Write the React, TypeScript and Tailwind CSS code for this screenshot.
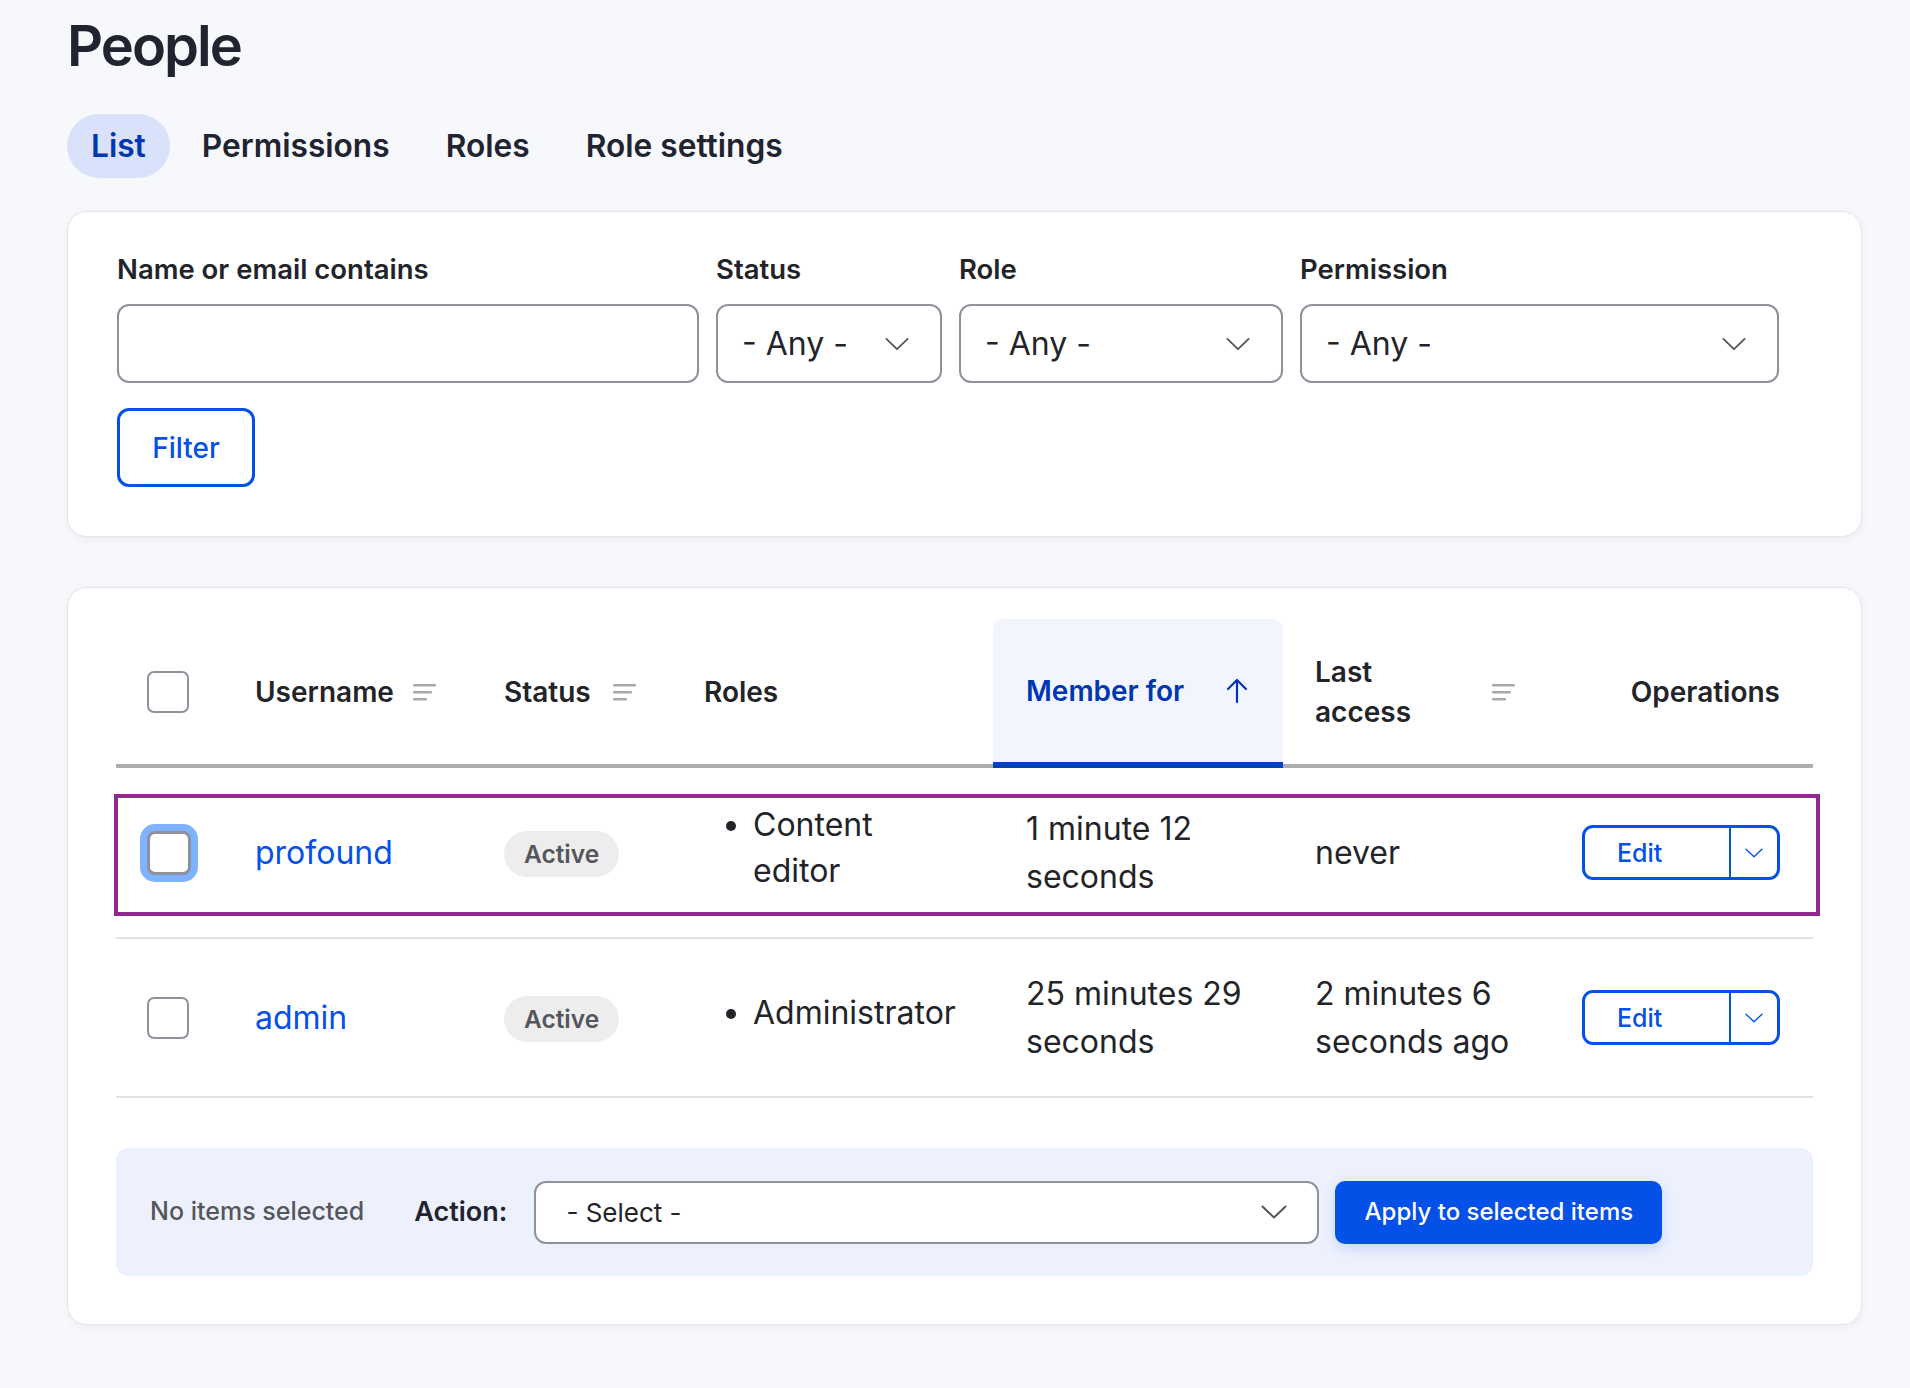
import React from "react";

const Chevron = ({ className = "" }: { className?: string }) => (
  <svg viewBox="0 0 26 14" className={className} fill="none" stroke="currentColor" strokeWidth="2" strokeLinecap="round" strokeLinejoin="round">
    <path d="M1.5 1.5 13 12.5 24.5 1.5" />
  </svg>
);

const SortIcon = () => (
  <svg width="24" height="18" viewBox="0 0 24 18" className="shrink-0">
    <rect x="0" y="1" width="23" height="2.4" rx="1" fill="#a9a9ad" />
    <rect x="0" y="8" width="19" height="2.4" rx="1" fill="#a9a9ad" />
    <rect x="0" y="15" width="14" height="2.4" rx="1" fill="#a9a9ad" />
  </svg>
);

const ArrowUp = () => (
  <svg width="22" height="26" viewBox="0 0 22 26" fill="none" stroke="#0036b1" strokeWidth="2.2" strokeLinecap="round" strokeLinejoin="round" className="shrink-0">
    <path d="M11 24V2M2 11l9-9 9 9" />
  </svg>
);

const Checkbox = ({ focused = false }: { focused?: boolean }) =>
  focused ? (
    <div className="w-[44px] h-[44px] rounded-[8px] border-[3px] border-[#8e929c] bg-white shadow-[0_0_0_7px_#7fb2ff]" />
  ) : (
    <div className="w-[42px] h-[42px] rounded-[7px] border-2 border-[#8e929c] bg-white" />
  );

const Select = ({ width, label }: { width: string; label: string }) => (
  <div className={`${width} h-[79px] rounded-[12px] border-2 border-[#8e929c] bg-white flex items-center justify-between pl-[24px] pr-[31px]`}>
    <span className="text-[32px] text-[#232429]">{label}</span>
    <Chevron className="w-[24px] h-[14px] text-[#55565b]" />
  </div>
);

const EditButton = () => (
  <div className="inline-flex h-[55px] rounded-[11px] border-[3px] border-[#0550e6] bg-white overflow-hidden">
    <span className="w-[144px] pl-[32px] flex items-center text-[25px] font-medium text-[#0550e6]">Edit</span>
    <span className="w-[2px] bg-[#0550e6]" />
    <span className="w-[46px] flex items-center justify-center">
      <Chevron className="w-[18px] h-[10px] text-[#0550e6]" />
    </span>
  </div>
);

const cols = "grid grid-cols-[107px_249px_200px_321px_290px_267px_1fr]";

const rows = [
  {
    name: "profound",
    roles: ["Content editor"],
    member: "1 minute 12 seconds",
    access: "never",
    focused: true,
  },
  {
    name: "admin",
    roles: ["Administrator"],
    member: "25 minutes 29 seconds",
    access: "2 minutes 6 seconds ago",
    focused: false,
  },
];

export default function App() {
  return (
    <div className="min-h-screen bg-[#f7f8fc] font-['Inter',sans-serif] text-[#232429] pl-[67px] pr-[48px] pt-[11px] pb-[64px]">
      <h1 className="text-[56px] leading-[70px] font-semibold tracking-[-0.035em] text-[#222330]">People</h1>

      <nav className="mt-[33px] flex gap-[8px]">
        {["List", "Permissions", "Roles", "Role settings"].map((t, i) => (
          <a
            key={t}
            href="#"
            className={
              i === 0
                ? "h-[64px] px-[24px] rounded-full flex items-center bg-[#d9e2fa] text-[#0036b1] text-[31.7px] font-semibold"
                : "h-[64px] px-[24px] rounded-full flex items-center text-[#222330] text-[31.7px] font-semibold"
            }
          >
            {t}
          </a>
        ))}
      </nav>

      {/* filters */}
      <section className="mt-[33px] rounded-[20px] border border-[#e4e6ec] bg-white shadow-[0_2px_8px_rgba(0,0,0,0.05)] pl-[49px] pt-[40px] pb-[49px]">
        <div className="flex gap-[17px]">
          <div>
            <label className="block text-[27.5px] leading-[35px] font-semibold mb-[17px]">Name or email contains</label>
            <div className="w-[582px] h-[79px] rounded-[12px] border-2 border-[#8e929c] bg-white" />
          </div>
          <div>
            <label className="block text-[27.5px] leading-[35px] font-semibold mb-[17px]">Status</label>
            <Select width="w-[226px]" label="- Any -" />
          </div>
          <div>
            <label className="block text-[27.5px] leading-[35px] font-semibold mb-[17px]">Role</label>
            <Select width="w-[324px]" label="- Any -" />
          </div>
          <div>
            <label className="block text-[27.5px] leading-[35px] font-semibold mb-[17px]">Permission</label>
            <Select width="w-[479px]" label="- Any -" />
          </div>
        </div>
        <button className="mt-[25px] h-[79px] w-[138px] rounded-[12px] border-[3px] border-[#0550e6] text-[#0550e6] text-[28px] font-medium bg-white">
          Filter
        </button>
      </section>

      {/* table */}
      <section className="mt-[50px] rounded-[20px] border border-[#e4e6ec] bg-white shadow-[0_2px_8px_rgba(0,0,0,0.05)] px-[48px] pt-[31px] pb-[48px]">
        <div className={`${cols} border-b-4 border-[#adadad] text-[28px] font-semibold leading-[40px]`}>
          <div className="h-[145px] flex items-center pl-[31px]">
            <Checkbox />
          </div>
          <div className="flex items-center justify-between pl-[32px] pr-[35px]">
            <span>Username</span>
            <SortIcon />
          </div>
          <div className="flex items-center justify-between pl-[32px] pr-[35px]">
            <span>Status</span>
            <SortIcon />
          </div>
          <div className="flex items-center pl-[32px]">Roles</div>
          <div className="-mb-[4px] border-b-[6px] border-[#003ecc] bg-[#f2f5fd] rounded-t-[10px] flex items-center justify-between pl-[33px] pr-[35px] text-[#0036b1]">
            <span>Member for</span>
            <ArrowUp />
          </div>
          <div className="flex items-center justify-between pl-[32px] pr-[34px]">
            <span className="max-w-[110px]">Last access</span>
            <SortIcon />
          </div>
          <div className="flex items-center justify-end pr-[33px]">Operations</div>
        </div>

        {rows.map((r) => (
          <div
            key={r.name}
            className={`${cols} relative border-b-2 border-[#e1e1e3] items-center text-[32px] leading-[48px] ${r.focused ? "h-[171px]" : "h-[159px]"}`}
          >
            <div className="pl-[31px]">
              <Checkbox focused={r.focused} />
            </div>
            <div className="pl-[32px]">
              <a href="#" className="text-[#0550e6]">{r.name}</a>
            </div>
            <div className="pl-[32px]">
              <span className="inline-flex items-center h-[46px] px-[20px] rounded-full bg-[#ededed] text-[24.5px] font-semibold text-[#55565b]">
                Active
              </span>
            </div>
            <div className="pl-[32px] pr-[32px]">
              <ul className="list-disc pl-[49px] leading-[46px] mb-[10px]">
                {r.roles.map((role) => (
                  <li key={role}>{role}</li>
                ))}
              </ul>
            </div>
            <div className="pl-[33px] pr-[24px]">{r.member}</div>
            <div className="pl-[32px] pr-[25px]">{r.access}</div>
            <div className="flex justify-end pr-[33px]">
              <EditButton />
            </div>
            {r.focused && (
              <div className="absolute top-[26px] bottom-[21px] -left-[2px] -right-[7px] border-4 border-[#92278f] pointer-events-none" />
            )}
          </div>
        ))}

        {/* bulk actions */}
        <div className="mt-[50px] h-[128px] rounded-[12px] bg-[#edf1fd] flex items-center pl-[34px]">
          <span className="text-[25px] font-medium text-[#55565b]">No items selected</span>
          <span className="ml-[50px] text-[27px] font-semibold text-[#222330]">Action:</span>
          <div className="ml-[27px] w-[785px] h-[63px] rounded-[12px] border-2 border-[#8e929c] bg-white flex items-center justify-between pl-[30px] pr-[30px]">
            <span className="text-[26px] text-[#232429]">- Select -</span>
            <Chevron className="w-[26px] h-[14px] text-[#55565b]" />
          </div>
          <button className="ml-[16px] w-[327px] h-[63px] rounded-[10px] bg-[#0550e6] text-white text-[24px] font-medium shadow-[0_4px_12px_rgba(5,80,230,0.18)]">
            Apply to selected items
          </button>
        </div>
      </section>
    </div>
  );
}
